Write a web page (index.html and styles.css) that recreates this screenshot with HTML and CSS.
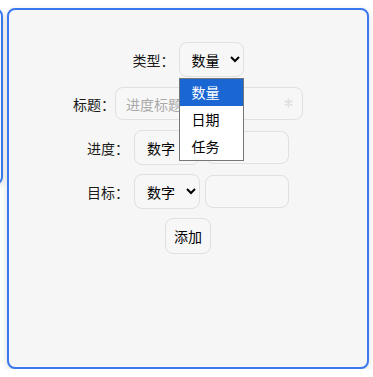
FILE: index.html
```html
<!DOCTYPE html>
<html lang="zh-CN">

<head>
    <meta charset="UTF-8">
    <meta name="viewport" content="width=device-width, initial-scale=1.0">
    <title>进度</title>
    <link rel="stylesheet" href="styles.css">
</head>

<body>
    <div class="board">
        <div class="card card-prev"></div>

        <div class="card">
            <form class="add-form">
                <div class="form-row">
                    <label class="row-label gap-4">类型：</label>
                    <div class="select-wrap">
                        <select class="field select-type">
                            <option selected>数量</option>
                            <option>日期</option>
                            <option>任务</option>
                        </select>
                        <!-- open dropdown list -->
                        <ul class="dropdown">
                            <li class="active">数量</li>
                            <li>日期</li>
                            <li>任务</li>
                        </ul>
                    </div>
                </div>

                <div class="form-row">
                    <label class="row-label">标题：</label>
                    <div class="input-wrap">
                        <input type="text" class="field input-title" placeholder="进度标题">
                        <svg class="input-icon" width="9" height="10" viewBox="0 0 10 10">
                            <path d="M5 0.8v8.4M1.4 2.9l7.2 4.2M1.4 7.1l7.2-4.2" stroke="#e0e0e0" stroke-width="2"
                                stroke-linecap="round" />
                        </svg>
                    </div>
                </div>

                <div class="form-row">
                    <label class="row-label gap-5">进度：</label>
                    <select class="field select-kind">
                        <option selected>数字</option>
                    </select>
                    <input type="text" class="field input-num">
                </div>

                <div class="form-row">
                    <label class="row-label gap-5">目标：</label>
                    <select class="field select-kind">
                        <option selected>数字</option>
                    </select>
                    <input type="text" class="field input-num">
                </div>

                <div class="form-row">
                    <button type="button" class="btn-add">添加</button>
                </div>
            </form>
        </div>
    </div>
</body>

</html>
```

FILE: styles.css
```css
body {
    margin: 0;
    background: #fff;
    font-family: "Noto Sans CJK SC", "Noto Sans", sans-serif;
    font-size: 14px;
    color: #1a1a1a;
    overflow: hidden;
}

.board {
    display: flex;
    align-items: flex-start;
    gap: 4px;
    padding-top: 8px;
    margin-left: -197px;
}

.card {
    box-sizing: border-box;
    flex: none;
    width: 362px;
    height: 361px;
    background: #f6f6f6;
    border: 2px solid #3a78ee;
    border-radius: 8px;
    box-shadow: 0 2px 6px rgba(0, 0, 0, 0.15);
    padding-top: 32px;
}

.card-prev {
    width: 200px;
    height: 177px;
}

.add-form {
    display: flex;
    flex-direction: column;
    align-items: center;
}

.form-row {
    display: flex;
    align-items: center;
    height: 35px;
    margin-bottom: 9px;
}

.row-label {
    width: 42px;
    line-height: 20px;
    white-space: nowrap;
}

.gap-4 {
    margin-right: 4px;
}

.gap-5 {
    margin-right: 5px;
}

.field {
    box-sizing: border-box;
    font: inherit;
    color: #000;
    background: #f7f7f7;
    border: 1px solid #e0e0e0;
    border-radius: 8px;
    outline: none;
}

select.field {
    height: 35px;
    padding: 0 4px 0 8px;
}

.select-type {
    width: 65px;
}

.select-kind {
    width: 66px;
    margin-right: 5px;
}

input.field {
    height: 33px;
    padding: 0 10px;
}

input.field::placeholder {
    color: #a9a9a9;
}

.input-title {
    width: 188px;
}

.input-num {
    width: 84px;
}

.select-wrap,
.input-wrap {
    position: relative;
    display: flex;
}

.input-icon {
    position: absolute;
    right: 10px;
    top: 11px;
}

.dropdown {
    position: absolute;
    top: 36px;
    left: 0;
    z-index: 2;
    box-sizing: border-box;
    width: 65px;
    margin: 0;
    padding: 0;
    list-style: none;
    background: #fff;
    border: 1px solid #767676;
}

.dropdown li {
    height: 27px;
    line-height: 27px;
    padding-left: 12px;
    color: #000;
}

.dropdown li.active {
    background: #1a67d3;
    color: #fff;
}

.btn-add {
    box-sizing: border-box;
    height: 36px;
    width: 46px;
    padding: 0;
    font: inherit;
    color: #000;
    background: #f7f7f7;
    border: 1px solid #e0e0e0;
    border-radius: 8px;
    cursor: pointer;
}
```
